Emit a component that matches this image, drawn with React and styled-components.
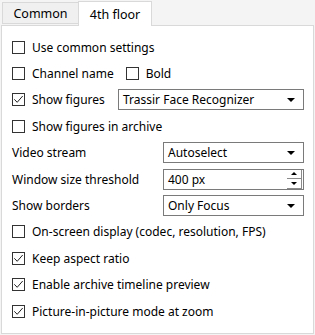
import React from "react";
import styled, { createGlobalStyle } from "styled-components";

const Global = createGlobalStyle`
  html, body {
    margin: 0;
    padding: 0;
    background: #f4f4f4;
  }
  body {
    font-family: "Noto Sans", "Open Sans", sans-serif;
    font-size: 12px;
    color: #000;
  }
`;

const Wrapper = styled.div`
  width: 315px;
  height: 335px;
  display: flex;
  flex-direction: column;
`;

const TabStrip = styled.div`
  display: flex;
  align-items: flex-end;
  height: 25px;
  padding-left: 2px;
  position: relative;
  z-index: 1;
`;

const Tab = styled.div`
  box-sizing: border-box;
  height: ${(p) => (p.$active ? "25px" : "22px")};
  width: ${(p) => p.$width}px;
  margin-bottom: ${(p) => (p.$active ? "-1px" : "1px")};
  margin-left: ${(p) => (p.$active ? "-1px" : "0")};
  background: ${(p) => (p.$active ? "#fff" : "#f0f0f0")};
  border: 1px solid #d9d9d9;
  border-bottom: ${(p) => (p.$active ? "none" : "1px solid #d9d9d9")};
  display: flex;
  align-items: center;
  justify-content: center;
  padding-top: ${(p) => (p.$active ? "0" : "1px")};
  font-size: 12.5px;
`;

const Panel = styled.div`
  box-sizing: border-box;
  margin: 0 1px 1px 1px;
  flex: 1;
  background: #fff;
  border: 1px solid #d9d9d9;
  padding: 8px 10px 0 10px;
  display: grid;
  grid-auto-rows: 26.4px;
`;

const Row = styled.div`
  display: flex;
  align-items: center;
`;

const Label = styled.span`
  width: ${(p) => (p.$width ? `${p.$width}px` : "auto")};
  flex-shrink: 0;
  white-space: nowrap;
`;

const CheckLabel = styled.label`
  display: flex;
  align-items: center;
  gap: 7px;
  white-space: nowrap;
  margin-right: ${(p) => p.$gap || 0}px;
`;

const Box = styled.span`
  box-sizing: border-box;
  width: 13px;
  height: 13px;
  border: 1px solid #333;
  background: #fff;
  display: flex;
  align-items: center;
  justify-content: center;
`;

const Combo = styled.div`
  box-sizing: border-box;
  height: 21px;
  width: ${(p) => p.$width}px;
  border: 1px solid #7a7a7a;
  background: #fff;
  display: flex;
  align-items: center;
  padding: 0 8px 0 4px;
`;

const ComboText = styled.span`
  flex: 1;
  white-space: nowrap;
`;

const Arrow = styled.span`
  width: 0;
  height: 0;
  border-left: 4px solid transparent;
  border-right: 4px solid transparent;
  border-top: 4px solid #000;
`;

const Spin = styled.div`
  box-sizing: border-box;
  display: flex;
  flex-direction: column;
  width: 15px;
  height: 19px;
  margin-right: -7px;
  border-right: 1px solid #8a8a8a;
  border-bottom: 1px solid #8a8a8a;
`;

const SpinHalf = styled.div`
  flex: 1;
  display: flex;
  align-items: center;
  justify-content: center;
  border-top: ${(p) => (p.$divided ? "1px solid #8a8a8a" : "none")};
`;

const SpinArrow = styled.span`
  width: 0;
  height: 0;
  border-left: 3px solid transparent;
  border-right: 3px solid transparent;
  ${(p) =>
    p.$up ? "border-bottom: 3px solid #000;" : "border-top: 3px solid #000;"}
`;

const Check = ({ checked }) => (
  <Box>
    {checked && (
      <svg width="11" height="11" viewBox="0 0 11 11">
        <path d="M1.3 5.3 L4.2 8.3 L9.7 2" fill="none" stroke="#222" strokeWidth="1" />
      </svg>
    )}
  </Box>
);

const CheckItem = ({ checked, label, gap }) => (
  <CheckLabel $gap={gap}>
    <Check checked={checked} />
    {label}
  </CheckLabel>
);

const ComboRow = ({ label, value }) => (
  <Row>
    <Label $width={151}>{label}</Label>
    <Combo $width={141}>
      <ComboText>{value}</ComboText>
      <Arrow />
    </Combo>
  </Row>
);

const App = () => {
  return (
    <Wrapper>
      <Global />
      <TabStrip>
        <Tab $width={77}>Common</Tab>
        <Tab $active $width={74}>4th floor</Tab>
      </TabStrip>
      <Panel>
        <Row>
          <CheckItem label="Use common settings" />
        </Row>
        <Row>
          <CheckItem label="Channel name" gap={12} />
          <CheckItem label="Bold" />
        </Row>
        <Row>
          <Label $width={106}>
            <CheckItem checked label="Show figures" />
          </Label>
          <Combo $width={186}>
            <ComboText>Trassir Face Recognizer</ComboText>
            <Arrow />
          </Combo>
        </Row>
        <Row>
          <CheckItem label="Show figures in archive" />
        </Row>
        <ComboRow label="Video stream" value="Autoselect" />
        <Row>
          <Label $width={151}>Window size threshold</Label>
          <Combo $width={141}>
            <ComboText>400 px</ComboText>
            <Spin>
              <SpinHalf>
                <SpinArrow $up />
              </SpinHalf>
              <SpinHalf $divided>
                <SpinArrow />
              </SpinHalf>
            </Spin>
          </Combo>
        </Row>
        <ComboRow label="Show borders" value="Only Focus" />
        <Row>
          <CheckItem label="On-screen display (codec, resolution, FPS)" />
        </Row>
        <Row>
          <CheckItem checked label="Keep aspect ratio" />
        </Row>
        <Row>
          <CheckItem checked label="Enable archive timeline preview" />
        </Row>
        <Row>
          <CheckItem checked label="Picture-in-picture mode at zoom" />
        </Row>
      </Panel>
    </Wrapper>
  );
};

export default App;
